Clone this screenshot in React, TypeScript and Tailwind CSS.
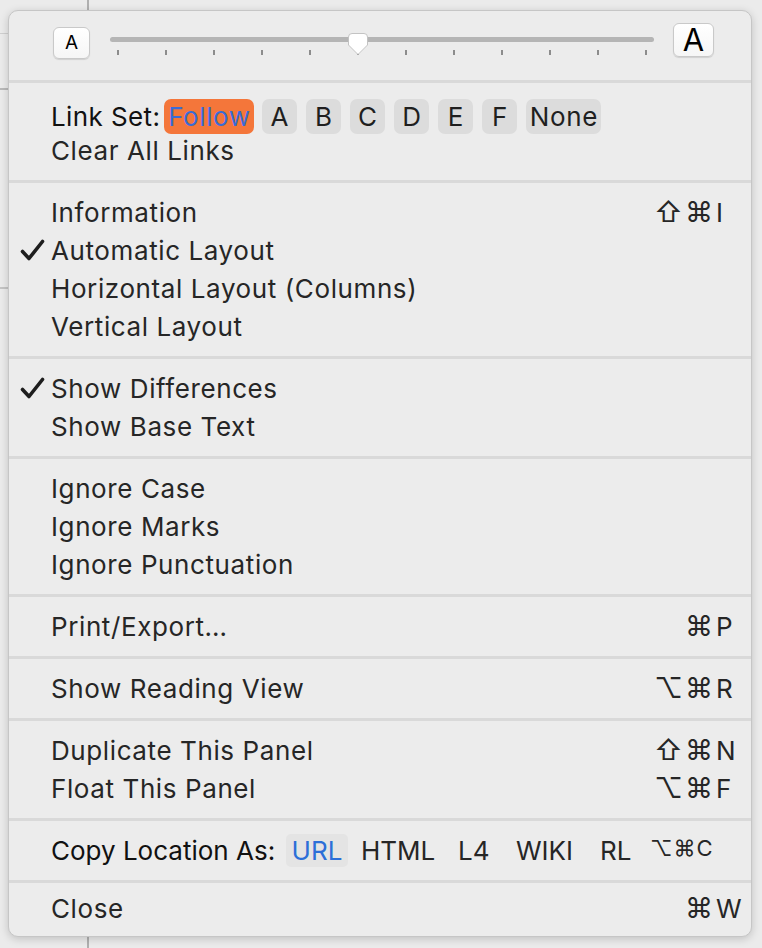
import React from "react";

const font = "font-[Inter,'DejaVu_Sans',sans-serif]";

function Check() {
  return (
    <svg width="25" height="22" viewBox="0 0 25 22">
      <path d="M2.5 12.5 L9 19.5 L22.5 2.5" fill="none" stroke="#1e1e1e" strokeWidth="3.6" strokeLinecap="round" strokeLinejoin="round" />
    </svg>
  );
}

function Sep() {
  return <div className="h-[3px] bg-[#d9d9d9]" />;
}

type RowProps = { label: string; checked?: boolean; mods?: string; k?: string };

function Row({ label, checked, mods, k }: RowProps) {
  return (
    <div className="flex h-[38px] items-center pr-[9px]">
      <div className="flex w-[42px] shrink-0 justify-end pr-[6px]">{checked && <Check />}</div>
      <span className="text-[26px] tracking-[0.6px] text-[#262626]">{label}</span>
      {k && (
        <div className="ml-auto flex items-center text-[26px] text-[#262626]">
          <span className="text-[28px] tracking-[2px]">{mods}</span>
          <span className="ml-[1px] w-[26px]">{k}</span>
        </div>
      )}
    </div>
  );
}

function Pill({ children, w }: { children: React.ReactNode; w: string }) {
  return (
    <div className={`flex h-[35px] items-center justify-center rounded-[7px] bg-[#dcdcdc] text-[26px] tracking-[0.6px] text-[#1f1f1f] ${w}`}>
      {children}
    </div>
  );
}

function SizeSlider() {
  const ticks = Array.from({ length: 12 }, (_, i) => i);
  return (
    <div className="flex h-[69px] items-start pl-[44px] pr-[37px]">
      <div className="mt-[16px] flex h-[32px] w-[37px] items-center justify-center rounded-[6px] border border-[#c9c9c9] bg-gradient-to-b from-white to-[#f6f6f6] text-[19px] text-black shadow-[0_1px_1px_rgba(0,0,0,0.12)]">
        A
      </div>
      <div className="relative ml-[20px] mt-[26px] w-[544px]">
        <div className="h-[5px] rounded-full bg-[#b5b5b5]" />
        <div className="mt-[8px] flex justify-between px-[7px]">
          {ticks.map((t) => (
            <div key={t} className="h-[5px] w-[2px] bg-[#8c8c8c]" />
          ))}
        </div>
        <svg className="absolute left-[238px] top-[-4px]" width="20" height="23" viewBox="0 0 20 23">
          <path d="M4 0.5 H16 A3.5 3.5 0 0 1 19.5 4 V12 L10 21.5 L0.5 12 V4 A3.5 3.5 0 0 1 4 0.5 Z" fill="#fff" stroke="#c3c3c3" strokeWidth="1" />
        </svg>
      </div>
      <div className="ml-[19px] mt-[12px] flex h-[34px] w-[41px] items-center justify-center rounded-[6px] border border-[#c9c9c9] bg-gradient-to-b from-white to-[#f6f6f6] text-[31px] text-black shadow-[0_1px_1px_rgba(0,0,0,0.12)]">
        A
      </div>
    </div>
  );
}

export default function App() {
  return (
    <div className={`relative h-[948px] w-[762px] overflow-hidden bg-[#ebebeb] pl-[8px] pt-[10px] ${font}`}>
      {/* background window lines */}
      <div className="absolute left-0 top-[33px] h-[1px] w-[10px] bg-[#cfcfcf]" />
      <div className="absolute left-0 top-[88px] h-[2px] w-[10px] bg-[#b9b9b9]" />
      <div className="absolute left-0 top-[287px] h-[2px] w-[10px] bg-[#c4c4c4]" />
      <div className="absolute left-[87px] top-0 h-[12px] w-[2px] bg-[#b0b0b0]" />
      <div className="absolute left-[87px] top-[936px] h-[12px] w-[2px] bg-[#b0b0b0]" />

      <div className="relative h-[927px] w-[744px] overflow-hidden rounded-[10px] border border-[#c6c6c6] bg-[#ececec] shadow-[0_2px_8px_rgba(0,0,0,0.18)]">
        <SizeSlider />
        <Sep />

        <div className="pb-[14px] pt-[15px]">
          <div className="flex h-[36px] items-center pl-[42px]">
            <span className="text-[26px] tracking-[0.4px] text-[#111]">Link Set:</span>
            <div className="ml-[4px] flex h-[35px] w-[90px] items-center justify-center rounded-[7px] bg-[#f4763a] text-[26px] tracking-[0.6px] text-[#3a6bd6]">
              Follow
            </div>
            <div className="ml-[8px] flex gap-[9px]">
              {["A", "B", "C", "D", "E", "F"].map((l) => (
                <Pill key={l} w="w-[35px]">
                  {l}
                </Pill>
              ))}
              <Pill w="w-[75px]">None</Pill>
            </div>
          </div>
          <div className="flex h-[32px] items-center pl-[42px]">
            <span className="text-[26px] tracking-[0.6px] text-[#262626]">Clear All Links</span>
          </div>
        </div>
        <Sep />

        <div className="pb-[11px] pt-[10px]">
          <Row label="Information" mods="⇧⌘" k="I" />
          <Row label="Automatic Layout" checked />
          <Row label="Horizontal Layout (Columns)" />
          <Row label="Vertical Layout" />
        </div>
        <Sep />

        <div className="pb-[11px] pt-[10px]">
          <Row label="Show Differences" checked />
          <Row label="Show Base Text" />
        </div>
        <Sep />

        <div className="pb-[11px] pt-[10px]">
          <Row label="Ignore Case" />
          <Row label="Ignore Marks" />
          <Row label="Ignore Punctuation" />
        </div>
        <Sep />

        <div className="pb-[11px] pt-[10px]">
          <Row label="Print/Export…" mods="⌘" k="P" />
        </div>
        <Sep />

        <div className="pb-[11px] pt-[10px]">
          <Row label="Show Reading View" mods="⌥⌘" k="R" />
        </div>
        <Sep />

        <div className="pb-[11px] pt-[10px]">
          <Row label="Duplicate This Panel" mods="⇧⌘" k="N" />
          <Row label="Float This Panel" mods="⌥⌘" k="F" />
        </div>
        <Sep />

        <div className="pb-[11px] pt-[10px]">
          <div className="flex h-[38px] items-center pl-[42px] text-[26px] text-[#262626]">
            <span className="w-[235px] text-[#111]">Copy Location As:</span>
            <div className="flex h-[33px] w-[62px] items-center justify-center rounded-[5px] bg-[#e4e4e4] text-[#2c6fd8]">URL</div>
            <span className="ml-[13px] w-[97px]">HTML</span>
            <span className="w-[58px]">L4</span>
            <span className="w-[84px]">WIKI</span>
            <span className="w-[50px]">RL</span>
            <span className="-mt-[4px] text-[22px] tracking-[1px]">⌥⌘C</span>
          </div>
        </div>
        <Sep />

        <div className="pb-[9px] pt-[6px]">
          <Row label="Close" mods="⌘" k="W" />
        </div>
      </div>
    </div>
  );
}
